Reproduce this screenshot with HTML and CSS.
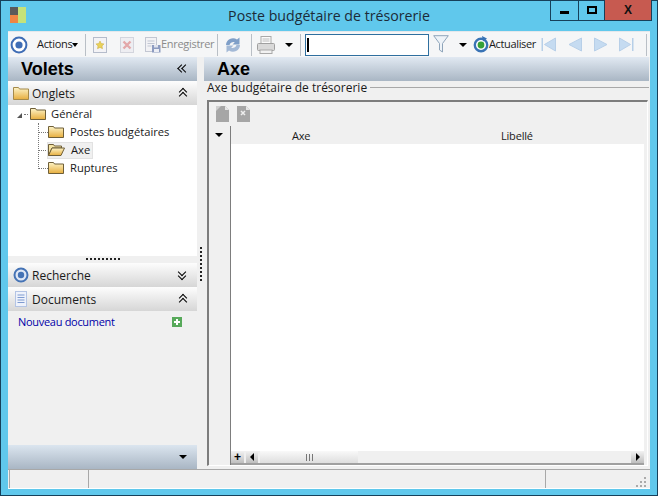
FILE: index.html
```html
<!DOCTYPE html>
<html lang="fr">
<head>
<meta charset="utf-8">
<title>Poste budgétaire de trésorerie</title>
<link rel="stylesheet" href="styles.css">
</head>
<body>
<div class="window">
  <header class="titlebar">
    <div class="title-left">
      <svg class="app-icon" width="16" height="16" viewBox="0 0 16 16"><rect x="0" width="8" height="8" fill="#5a5a5a"/><rect x="0" y="8" width="8" height="8" fill="#ef8544"/><rect x="8" width="8" height="16" fill="#c5e27a"/></svg>
    </div>
    <div class="title-text">Poste budgétaire de trésorerie</div>
    <div class="win-controls">
      <div class="wc wc-min"><span class="wc-min-glyph"></span></div>
      <div class="wc wc-max"><span class="wc-max-glyph"></span></div>
      <div class="wc wc-close">X</div>
    </div>
  </header>
  <div class="client">
    <div class="toolbar">
      <svg class="t-target" width="18" height="18" viewBox="0 0 18 18"><circle cx="9" cy="9" r="7.4" fill="#fff" stroke="#3f6db5" stroke-width="2"/><circle cx="9" cy="9" r="3.6" fill="#3f6db5"/></svg>
      <span class="t-actions">Actions</span><span class="caret caret-actions"></span>
      <span class="sep sep-1"></span>
      <svg class="t-new" width="14" height="16" viewBox="0 0 14 16"><rect x=".5" y=".5" width="13" height="15" fill="#f3f3f6" stroke="#b5bccb"/><path d="M7 4l1.2 2.5 2.8.4-2 2 .5 2.8L7 10.400l-2.500 1.300.5-2.800-2-2 2.800-.4z" fill="#e9d25b" stroke="#c8a93a" stroke-width=".5"/></svg>
      <svg class="t-del" width="14" height="16" viewBox="0 0 14 16"><rect x=".5" y=".5" width="13" height="15" fill="#eeeef2" stroke="#d3d5dd"/><path d="M3.500 4.500l7 7m0-7l-7 7" stroke="#e3a8aa" stroke-width="2.400"/></svg>
      <svg class="t-save" width="16" height="16" viewBox="0 0 16 16"><rect x=".5" y=".5" width="11" height="14" fill="#f2f2f5" stroke="#c3c7d2"/><path d="M2.500 4h7M2.500 6.500h7M2.500 9h4" stroke="#c2c7d3"/><rect x="7" y="8" width="8.500" height="7.500" fill="#8d9bc0"/><rect x="9" y="8" width="4" height="2.500" fill="#dfe3ee"/><rect x="9" y="12" width="5" height="3" fill="#eceef5"/></svg>
      <span class="t-save-label">Enregistrer</span>
      <span class="sep sep-2"></span>
      <svg class="t-refresh" width="18" height="18" viewBox="0 0 18 18"><path d="M2 9a7 7 0 0 1 11-5.500L15.500 1.500V8.500h-7l2.300-2.300A4 4 0 0 0 5.500 9z" fill="#7f9fc8"/><path d="M16 9a7 7 0 0 1-11 5.500L2.500 16.500V9.500h7l-2.300 2.300A4 4 0 0 0 12.500 9z" fill="#a3b9d6"/></svg>
      <span class="sep sep-3"></span>
      <svg class="t-print" width="18" height="18" viewBox="0 0 18 18"><rect x="4" y=".5" width="10" height="7" fill="#fbfbfb" stroke="#a9a9a9"/><rect x=".5" y="7.500" width="17" height="7" rx="1" fill="#d9d9d9" stroke="#a0a0a0"/><rect x="3" y="14" width="12" height="3.500" fill="#f2f2f2" stroke="#a9a9a9"/><path d="M5.500 3h7M5.500 5h7" stroke="#bbb"/></svg>
      <span class="caret caret-print"></span>
      <span class="sep sep-4"></span>
      <div class="search-box"><span class="search-cursor"></span></div>
      <svg class="t-funnel" width="16" height="19" viewBox="0 0 16 19"><path d="M.7.7h14.600L9.500 8.500V17l-3-2V8.500z" fill="#eef3f8" stroke="#8fa5ba"/></svg>
      <span class="caret caret-filter"></span>
      <svg class="t-refresh2" width="16" height="17" viewBox="0 0 16 17"><circle cx="8" cy="9" r="6.200" fill="#fff" stroke="#3973b5" stroke-width="2.400"/><circle cx="8" cy="9" r="3.400" fill="#36a038"/><path d="M9 0l5 2.500-4 3z" fill="#3973b5"/></svg>
      <span class="t-refresh-label">Actualiser</span>
      <svg class="t-nav t-nav-1" width="15" height="15" viewBox="0 0 15 15"><path d="M3.500 7.500L14.500 1v13z" fill="#c5dbf1" stroke="#b7cfe8"/><rect x=".5" y="1" width="1.500" height="13" fill="#b7cfe8"/></svg>
      <svg class="t-nav t-nav-2" width="14" height="15" viewBox="0 0 14 15"><path d="M1 7.500L13.500 1v13z" fill="#c5dbf1" stroke="#b7cfe8"/></svg>
      <svg class="t-nav t-nav-3" width="14" height="15" viewBox="0 0 14 15"><path d="M13 7.500L.5 1v13z" fill="#c5dbf1" stroke="#b7cfe8"/></svg>
      <svg class="t-nav t-nav-4" width="15" height="15" viewBox="0 0 15 15"><path d="M11.500 7.500L.5 1v13z" fill="#c5dbf1" stroke="#b7cfe8"/><rect x="13" y="1" width="1.500" height="13" fill="#b7cfe8"/></svg>
      <span class="sep sep-5"></span>
    </div>
    <div class="main">
      <aside class="left">
        <div class="pane-title">
          <span class="pane-title-text">Volets</span>
          <span class="dbl dbl-left"></span>
        </div>
        <div class="section">
          <svg class="s-icon" width="16" height="14" viewBox="0 0 16 14"><defs><linearGradient id="fold" x1="0" y1="0" x2="0" y2="1"><stop offset="0" stop-color="#fdf4c8"/><stop offset="1" stop-color="#e7ae3e"/></linearGradient></defs><path d="M.5 13.500V1.500h5l1 1.500h9v10.500z" fill="url(#fold)" stroke="#a58a4a"/></svg>
          <span class="s-label">Onglets</span>
          <span class="dbl dbl-up"></span>
        </div>
        <div class="tree">
          <div class="tree-row tree-root">
            <span class="expander"></span><span class="dots-h dots-root"></span>
            <svg class="folder" width="16" height="12" viewBox="0 0 16 12"><path d="M.5 11.500V.5h5l1 1.500h9v9.500z" fill="url(#fold)" stroke="#6f5f38"/></svg>
            <span class="tree-label">Général</span>
          </div>
          <div class="tree-children">
            <div class="tree-row tree-child">
              <span class="dots-h"></span>
              <svg class="folder" width="16" height="12" viewBox="0 0 16 12"><path d="M.5 11.500V.5h5l1 1.500h9v9.500z" fill="url(#fold)" stroke="#6f5f38"/></svg>
              <span class="tree-label">Postes budgétaires</span>
            </div>
            <div class="tree-row tree-child">
              <span class="dots-h"></span>
              <span class="selected">
                <svg class="folder" width="17" height="12" viewBox="0 0 17 12"><path d="M.5 11.500V.5h5l1 1.500h7v2H4z" fill="#f5e4a5" stroke="#6f5f38"/><path d="M.5 11.500L4 4h12.500L13 11.500z" fill="url(#fold)" stroke="#6f5f38"/></svg>
                <span class="tree-label">Axe</span>
              </span>
            </div>
            <div class="tree-row tree-child">
              <span class="dots-h"></span>
              <svg class="folder" width="16" height="12" viewBox="0 0 16 12"><path d="M.5 11.500V.5h5l1 1.500h9v9.500z" fill="url(#fold)" stroke="#6f5f38"/></svg>
              <span class="tree-label">Ruptures</span>
            </div>
          </div>
        </div>
        <div class="grip"><span class="grip-dots"></span></div>
        <div class="section">
          <svg class="s-icon" width="16" height="16" viewBox="0 0 16 16"><circle cx="8" cy="8" r="6.500" fill="#dfe7f5" stroke="#4573b5" stroke-width="2"/><circle cx="8" cy="8" r="3.200" fill="#4573b5"/></svg>
          <span class="s-label">Recherche</span>
          <span class="dbl dbl-down"></span>
        </div>
        <div class="section">
          <svg class="s-icon" width="16" height="16" viewBox="0 0 16 16"><rect x="2.500" y=".5" width="11" height="15" fill="#eef2fb" stroke="#b4c4e4"/><path d="M4.500 4h7M4.500 6.500h7M4.500 9h7M4.500 11.500h7" stroke="#7f9bd0"/></svg>
          <span class="s-label">Documents</span>
          <span class="dbl dbl-up"></span>
        </div>
        <div class="docs">
          <a class="doc-link">Nouveau document</a>
          <svg class="plus" width="10" height="10" viewBox="0 0 10 10"><rect width="10" height="10" fill="#57a95a"/><path d="M5 2v6M2 5h6" stroke="#fff" stroke-width="2"/></svg>
        </div>
        <div class="left-foot"><span class="caret caret-foot"></span></div>
      </aside>
      <div class="splitter"><span class="split-dots"></span></div>
      <section class="right">
        <div class="pane-title pane-title-right"><span class="pane-title-text">Axe</span></div>
        <div class="legend-row"><span class="legend">Axe budgétaire de trésorerie</span><span class="legend-line"></span></div>
        <div class="group">
          <div class="group-tools">
            <svg class="g-icon" width="13" height="16" viewBox="0 0 13 16"><path d="M0 0h9l4 4v12H0z" fill="#a6a6a6"/><path d="M9 0l4 4H9z" fill="#e6e6e6"/><path d="M0 0h5L0 5z" fill="#cfcfcf"/></svg>
            <svg class="g-icon" width="13" height="16" viewBox="0 0 13 16"><path d="M0 0h9l4 4v12H0z" fill="#a6a6a6"/><path d="M9 0l4 4H9z" fill="#e6e6e6"/><path d="M4 5l4 4M8 5L4 9" stroke="#eee" stroke-width="1.500"/></svg>
          </div>
          <div class="grid">
            <div class="row-header">
              <span class="caret caret-grid"></span>
            </div>
            <div class="grid-body">
              <div class="grid-head"><span class="col col-axe">Axe</span><span class="col col-lib">Libellé</span></div>
              <div class="grid-rows"></div>
              <div class="hscroll">
                <span class="sb-btn sb-plus">+</span>
                <span class="sb-btn sb-prev"><span class="arrow-left"></span></span>
                <span class="sb-thumb"><span class="sb-grip"></span></span>
                <span class="sb-track"></span>
                <span class="sb-btn sb-next"><span class="arrow-right"></span></span>
              </div>
            </div>
          </div>
        </div>
      </section>
    </div>
    <footer class="statusbar">
      <div class="st st-1"></div>
      <div class="st st-2"></div>
      <div class="st st-3">
        <svg class="resize" width="11" height="11" viewBox="0 0 11 11"><path d="M8 0h2v2H8zM4 4h2v2H4zM8 4h2v2H8zM0 8h2v2H0zM4 8h2v2H4zM8 8h2v2H8z" fill="#aaa"/></svg>
      </div>
    </footer>
  </div>
</div>
</body>
</html>
```
FILE: styles.css
```css
* { box-sizing: border-box; }
html, body { margin: 0; padding: 0; }
body { width: 658px; height: 496px; overflow: hidden; font-family: "Open Sans", "Noto Sans", "Liberation Sans", sans-serif; font-size: 11.5px; color: #1a1a1a; }
.window { width: 658px; height: 496px; background: #60c8ec; border: 1px solid #16405a; display: flex; flex-direction: column; }
.titlebar { height: 30px; flex: none; display: grid; grid-template-columns: 1fr auto 1fr; }
.title-left { padding: 6px 0 0 9px; }
.app-icon { display: block; }
.title-text { font-size: 14.200px; line-height: 30px; color: #1c2b38; }
.win-controls { justify-self: end; display: flex; height: 21px; margin-right: 5px; margin-top: -1px; border: 1px solid #16405a; border-top: 0; }
.wc { display: flex; align-items: center; justify-content: center; height: 100%; }
.wc-min { width: 28px; border-right: 1px solid #16405a; }
.wc-max { width: 26px; border-right: 1px solid #16405a; }
.wc-close { width: 46px; background: #c75a50; font: bold 12px "Liberation Sans", sans-serif; color: #111; }
.wc-min-glyph { width: 9px; height: 3px; background: #000; margin-top: 5px; }
.wc-max-glyph { width: 10px; height: 8px; border: 2px solid #000; }
.client { flex: 1; display: flex; flex-direction: column; margin: 0 7px 6px; background: #f0f0f0; min-height: 0; }
.toolbar { height: 26px; flex: none; display: flex; align-items: center; background: #f5f6f7; padding-left: 2px; border-top: 1px solid #e4e8ec; }
.toolbar > * { flex: none; }
.t-actions { margin: -2px 0 0 9px; width: 35px; font-size: 11px; letter-spacing: -.3px; }
.caret { display: block; width: 0; height: 0; border-left: 4px solid transparent; border-right: 4px solid transparent; border-top: 4px solid #000; flex: none; }
.caret-actions { border-left-width: 3px; border-right-width: 3px; }
.sep { width: 1px; height: 22px; background: #b9bfc6; flex: none; }
.sep-1 { margin-left: 7px; }
.t-new { margin-left: 7px; }
.t-del { margin-left: 13px; }
.t-save { margin-left: 11px; }
.t-save-label { margin-top: -2px; color: #8b8b8b; font-size: 11px; width: 52px; letter-spacing: -.3px; white-space: nowrap; }
.sep-2 { margin-left: 4px; }
.t-refresh { margin-left: 6px; }
.sep-3 { margin-left: 9px; }
.t-print { margin-left: 5px; }
.caret-print { margin-left: 10px; }
.sep-4 { margin-left: 7px; }
.search-box { width: 124px; height: 22px; margin-left: 4px; background: #fff; border: 1px solid #2f6f9f; padding: 3px 0 0 1px; }
.search-cursor { display: block; width: 2px; height: 14px; background: #000; }
.t-funnel { margin-left: 4px; }
.caret-filter { margin-left: 10px; }
.t-refresh2 { margin-left: 6px; }
.t-refresh-label { margin-top: -2px; font-size: 11px; letter-spacing: -.35px; width: 48px; white-space: nowrap; }
.t-nav-1 { margin-left: 4px; }
.t-nav-2 { margin-left: 12px; }
.t-nav-3 { margin-left: 12px; }
.t-nav-4 { margin-left: 11px; }
.sep-5 { margin-left: 12px; }
.main { flex: 1; display: flex; min-height: 0; }
.left { width: 189px; flex: none; display: flex; flex-direction: column; }
.pane-title { height: 24px; flex: none; display: flex; align-items: center; justify-content: space-between; padding: 0 10px 0 13px; background: linear-gradient(#e1e9f2, #a9b6c4); }
.pane-title-text { font: bold 18px "Liberation Sans", sans-serif; color: #000; }
.section { height: 24px; flex: none; display: flex; align-items: center; padding: 0 10px 0 5px; background: linear-gradient(#fdfdfd, #d6d6d6); }
.s-icon { flex: none; }
.s-label { flex: 1; margin-left: 3px; font-size: 12px; color: #1a1a1a; }
.dbl { position: relative; width: 9px; height: 10px; flex: none; }
.dbl::before, .dbl::after { content: ""; position: absolute; left: 2px; width: 5px; height: 5px; border-left: 1.600px solid #000; border-top: 1.600px solid #000; transform: rotate(45deg); }
.dbl::before { top: 1px; }
.dbl::after { top: 5px; }
.dbl-down { transform: rotate(180deg); }
.dbl-left { transform: rotate(-90deg); }
.tree { height: 151px; flex: none; background: #fff; padding: 0 0 0 7px; }
.tree-row { height: 18px; display: flex; align-items: center; }
.expander { width: 0; height: 0; border-left: 5px solid transparent; border-bottom: 5px solid #555; margin-left: 2px; margin-top: 2px; flex: none; }
.dots-h { width: 9px; border-top: 1px dotted #777; flex: none; }
.dots-root { width: 4px; margin: 0 2px; }
.tree-label { margin: -2px 0 0 5px; color: #1a1a1a; font-size: 11.200px; white-space: nowrap; }
.tree-child .tree-label { margin-left: 6px; }
.folder { flex: none; }
.tree-children { margin-left: 23px; border-left: 1px dotted #777; height: 46px; }
.selected { display: flex; align-items: center; height: 17px; margin-left: -1px; background: #f0f0f0; border: 1px solid #e2e2e2; padding-right: 2px; }
.grip { height: 7px; flex: none; display: flex; justify-content: center; padding-top: 2px; background: #f0f0f0; }
.grip-dots { width: 34px; height: 2px; background: repeating-linear-gradient(90deg, #222 0 2px, transparent 2px 4px); }
.docs { height: 134px; flex: none; display: flex; align-items: flex-start; justify-content: space-between; padding: 3px 15px 0 10px; }
.doc-link { color: #0000a8; font-size: 11px; letter-spacing: -.3px; }
.plus { margin-top: 3px; }
.left-foot { flex: 1; display: flex; align-items: center; justify-content: flex-end; padding-right: 10px; background: linear-gradient(#dbe5ef, #a9b6c4); }
.splitter { width: 7px; flex: none; padding: 190px 0 0 3px; }
.split-dots { display: block; width: 2px; height: 34px; background: repeating-linear-gradient(#222 0 2px, transparent 2px 4px); }
.right { flex: 1; min-width: 0; display: flex; flex-direction: column; padding-right: 1px; }
.legend-row { height: 13px; flex: none; display: flex; align-items: center; padding-left: 3px; }
.legend { font-size: 12px; white-space: nowrap; line-height: 13px; }
.legend-line { flex: 1; height: 1px; margin-left: 3px; background: #a8a8a8; }
.group { flex: none; height: 366px; margin: 6px 1px 0 3px; border-top: 2px solid #7d7d7d; border-left: 2px solid #7d7d7d; border-right: 1px solid #fff; border-bottom: 1px solid #fff; display: flex; flex-direction: column; background: #f0f0f0; }
.group-tools { height: 24px; flex: none; display: flex; align-items: center; gap: 8px; padding-left: 7px; }
.grid { flex: 1; min-height: 0; display: flex; margin-right: 3px; }
.row-header { width: 22px; flex: none; border-right: 1px solid #7d7d7d; padding-top: 7px; }
.caret-grid { margin-left: 6px; }
.grid-body { flex: 1; min-width: 0; display: flex; flex-direction: column; background: #fff; }
.grid-head { height: 18px; flex: none; background: #f0f0f0; display: flex; align-items: center; font-size: 11px; letter-spacing: -.2px; }
.col-axe { margin-left: 61px; width: 209px; }
.grid-rows { flex: 1; }
.hscroll { height: 14px; flex: none; display: flex; background: #f0f0f0; border-bottom: 2px solid #a0a0a0; }
.sb-btn { width: 13px; flex: none; display: flex; align-items: center; justify-content: center; background: linear-gradient(#f2f2f2, #bfbfbf); }
.sb-plus { font: bold 12px/1 "Liberation Sans", sans-serif; color: #000; }
.sb-prev { margin-left: 2px; width: 12px; }
.sb-thumb { width: 98px; margin-left: 2px; display: flex; align-items: center; justify-content: center; background: linear-gradient(#f9f9f9, #dedede); }
.sb-grip { width: 7px; height: 7px; background: repeating-linear-gradient(90deg, #777 0 1px, transparent 1px 3px); }
.sb-track { flex: 1; }
.arrow-left { width: 0; height: 0; border-top: 4px solid transparent; border-bottom: 4px solid transparent; border-right: 4px solid #000; }
.arrow-right { width: 0; height: 0; border-top: 4px solid transparent; border-bottom: 4px solid transparent; border-left: 4px solid #000; }
.statusbar { height: 20px; flex: none; display: flex; border-top: 1px solid #a8a8a8; background: #f0f0f0; border-bottom: 1px solid #fff; }
.st { height: 100%; }
.st-1 { width: 80px; border-left: 1px solid #a8a8a8; border-right: 1px solid #a8a8a8; margin-left: 1px; }
.st-2 { width: 457px; border-right: 1px solid #a8a8a8; }
.st-3 { flex: 1; display: flex; justify-content: flex-end; align-items: flex-end; padding-right: 3px; }
.resize { display: block; }
```
